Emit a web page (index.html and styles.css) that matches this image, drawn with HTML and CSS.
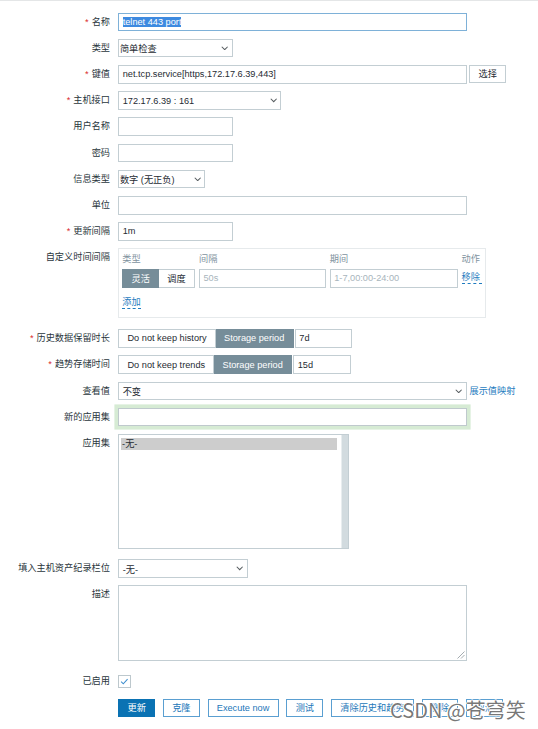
FILE: index.html
```html
<!DOCTYPE html>
<html lang="zh">
<head>
<meta charset="utf-8">
<title>监控项</title>
<link rel="stylesheet" href="styles.css">
</head>
<body>
<form class="form">
  <div class="row">
    <label class="lbl req">名称</label>
    <div class="ctl w-full focus"><span class="hl">telnet 443 port</span></div>
  </div>
  <div class="row">
    <label class="lbl">类型</label>
    <div class="ctl select tight w-sm"><span>简单检查</span><svg class="chev" viewBox="0 0 8 5"><polyline points="0.8,0.8 4,4 7.2,0.8"/></svg></div>
  </div>
  <div class="row">
    <label class="lbl req">键值</label>
    <div class="ctl w-full">net.tcp.service[https,172.17.6.39,443]</div>
    <button type="button" class="btn pick">选择</button>
  </div>
  <div class="row">
    <label class="lbl req">主机接口</label>
    <div class="ctl select w-host"><span>172.17.6.39 : 161</span><svg class="chev" viewBox="0 0 8 5"><polyline points="0.8,0.8 4,4 7.2,0.8"/></svg></div>
  </div>
  <div class="row">
    <label class="lbl">用户名称</label>
    <div class="ctl w-sm"></div>
  </div>
  <div class="row">
    <label class="lbl">密码</label>
    <div class="ctl w-sm"></div>
  </div>
  <div class="row">
    <label class="lbl">信息类型</label>
    <div class="ctl select tight w-info"><span>数字 (无正负)</span><svg class="chev" viewBox="0 0 8 5"><polyline points="0.8,0.8 4,4 7.2,0.8"/></svg></div>
  </div>
  <div class="row">
    <label class="lbl">单位</label>
    <div class="ctl w-full"></div>
  </div>
  <div class="row">
    <label class="lbl req">更新间隔</label>
    <div class="ctl w-sm">1m</div>
  </div>
  <div class="row row-box">
    <label class="lbl">自定义时间间隔</label>
    <div class="intervals">
      <div class="igrid ihead"><span>类型</span><span>间隔</span><span>期间</span><span>动作</span></div>
      <div class="igrid irow">
        <div class="seg"><span class="on">灵活</span><span>调度</span></div>
        <div class="ctl ph">50s</div>
        <div class="ctl ph">1-7,00:00-24:00</div>
        <a class="link dashed">移除</a>
      </div>
      <div class="iadd"><a class="link dashed">添加</a></div>
    </div>
  </div>
  <div class="row">
    <label class="lbl req">历史数据保留时长</label>
    <div class="seg"><span>Do not keep history</span><span class="on">Storage period</span></div>
    <div class="ctl w-days">7d</div>
  </div>
  <div class="row">
    <label class="lbl req">趋势存储时间</label>
    <div class="seg"><span>Do not keep trends</span><span class="on">Storage period</span></div>
    <div class="ctl w-days">15d</div>
  </div>
  <div class="row">
    <label class="lbl">查看值</label>
    <div class="ctl select w-full"><span>不变</span><svg class="chev" viewBox="0 0 8 5"><polyline points="0.8,0.8 4,4 7.2,0.8"/></svg></div>
    <a class="link map">展示值映射</a>
  </div>
  <div class="row">
    <label class="lbl">新的应用集</label>
    <div class="ctl w-full glow"></div>
  </div>
  <div class="row row-list">
    <label class="lbl">应用集</label>
    <div class="listbox">
      <div class="options"><div class="opt sel">-无-</div></div>
      <div class="scroll"></div>
    </div>
  </div>
  <div class="row">
    <label class="lbl">填入主机资产纪录栏位</label>
    <div class="ctl select w-inv"><span>-无-</span><svg class="chev" viewBox="0 0 8 5"><polyline points="0.8,0.8 4,4 7.2,0.8"/></svg></div>
  </div>
  <div class="row row-desc">
    <label class="lbl">描述</label>
    <div class="textarea">
      <svg class="grip" viewBox="0 0 9 9"><line x1="8.5" y1="1.5" x2="1.5" y2="8.5"/><line x1="8.5" y1="5" x2="5" y2="8.5"/></svg>
    </div>
  </div>
  <div class="row row-check">
    <label class="lbl">已启用</label>
    <div class="check"><svg viewBox="0 0 12 12"><polyline points="2.4,6.4 4.9,8.9 9.8,3.6"/></svg></div>
  </div>
  <div class="row">
    <span class="lbl"></span>
    <div class="btns">
      <button type="button" class="btn primary">更新</button>
      <button type="button" class="btn">克隆</button>
      <button type="button" class="btn">Execute now</button>
      <button type="button" class="btn">测试</button>
      <button type="button" class="btn">清除历史和趋势</button>
      <button type="button" class="btn">删除</button>
      <button type="button" class="btn">取消</button>
    </div>
  </div>
</form>
<div class="watermark">CSDN @苍穹笑</div>
</body>
</html>
```

FILE: styles.css
```css
* { box-sizing: border-box; }

html, body {
  margin: 0;
  padding: 0;
  background: #fff;
}

body {
  position: relative;
  min-height: 729px;
  border-top: 1px solid #e4e6e7;
  font-family: "Liberation Sans", "Noto Sans CJK SC", sans-serif;
  font-size: 9.2px;
  color: #1f2c33;
}

.form {
  padding-top: 11.7px;
}

.row {
  display: flex;
  align-items: flex-start;
  margin-bottom: 7.6px;
}

.row-box { margin-bottom: 11.6px; }
.row-list { margin-bottom: 10px; }
.row-desc { margin-bottom: 10.7px; }
.row-check { margin-bottom: 8.4px; align-items: center; height: 18.6px; }

.lbl {
  flex: 0 0 110px;
  margin-right: 8.3px;
  text-align: right;
  line-height: 18.6px;
  white-space: nowrap;
  color: #2a363c;
}

.req::before {
  content: "*";
  color: #d92a2a;
  margin-right: 3px;
}

.ctl {
  display: flex;
  align-items: center;
  height: 18.6px;
  padding: 0 3.4px;
  border: 1px solid #c3ced3;
  background: #fff;
  white-space: nowrap;
  overflow: hidden;
  color: #1f2c33;
}

.w-full { width: 348.4px; }
.w-sm { width: 114.6px; }
.w-host { width: 163.2px; }
.w-info { width: 87.2px; }
.w-inv { width: 129.4px; }
.w-days { width: 57.4px; margin-left: 1.4px; }

.focus { border-color: #7eb1d8; }

.hl {
  background: #3d8ae0;
  color: #fff;
  line-height: 10.4px;
}

.select { padding-right: 3.2px; }
.select.tight { padding-left: 0.6px; }

.chev {
  width: 7.4px;
  height: 4.6px;
  margin-left: auto;
  flex: none;
  fill: none;
  stroke: #555b5e;
  stroke-width: 1.1;
}

.btn {
  height: 18.4px;
  padding: 0 8.2px;
  border: 1px solid #5a9fd1;
  background: #fff;
  color: #1c77b9;
  font-family: inherit;
  font-size: 9.2px;
  line-height: 16px;
  white-space: nowrap;
  cursor: pointer;
}

.btn.primary {
  background: #0a72b3;
  border-color: #0a72b3;
  color: #fff;
}

.btn.pick {
  margin-left: 2.6px;
  height: 18.4px;
  border-color: #c3ced3;
  color: #1f2c33;
}

.btns {
  display: flex;
  gap: 7.9px;
}

.link {
  color: #1f7cc0;
  text-decoration: none;
  cursor: pointer;
}

.link.dashed {
  border-bottom: 1px dashed #1f7cc0;
  line-height: 11px;
}

.link.map {
  margin-left: 2.8px;
  line-height: 18.6px;
}

/* custom intervals */
.intervals {
  width: 367.4px;
  height: 69.2px;
  padding: 3.8px 3px 4.5px;
  border: 1px solid #e6eaec;
  background: #fff;
}

.igrid {
  display: grid;
  grid-template-columns: 73.4px 127.4px 128.3px auto;
  column-gap: 3.4px;
  align-items: center;
}

.ihead {
  line-height: 12px;
  height: 12px;
  margin-bottom: 4px;
  color: #8193a0;
}

.irow .ctl { width: auto; height: 18.4px; }

.ph { color: #a8b5bc; }

.iadd {
  margin-top: 5.5px;
  height: 19px;
  display: flex;
  align-items: center;
}

/* segmented radio */
.seg {
  display: flex;
  height: 18.4px;
}

.seg span {
  display: flex;
  align-items: center;
  padding: 0 8.2px;
  border: 1px solid #c3ced3;
  background: #fff;
  white-space: nowrap;
}

.seg span + span { border-left: none; }

.seg span.on {
  background: #768d99;
  border-color: #768d99;
  color: #fff;
}

/* new application glow */
.glow {
  border-color: #bfc9cd;
  box-shadow: 0 0 0 3.6px #d6ebd4;
}

/* listbox */
.listbox {
  display: flex;
  width: 231px;
  height: 115.3px;
  border: 1px solid #c3ced3;
  background: #fff;
}

.options {
  flex: 1;
  padding: 2.6px 4px 0 1.8px;
}

.opt {
  height: 12.3px;
  line-height: 12.3px;
  padding-left: 1px;
}

.opt.sel { background: #cdcdcd; }

.scroll {
  width: 7.4px;
  background: #d2dbdf;
  border-left: 1px solid #e8edef;
}

/* textarea */
.textarea {
  position: relative;
  width: 348.4px;
  height: 76px;
  border: 1px solid #c3ced3;
  background: #fff;
}

.grip {
  position: absolute;
  right: 1px;
  bottom: 1px;
  width: 9px;
  height: 9px;
  stroke: #9aa3a7;
  stroke-width: 0.9;
}

/* checkbox */
.check {
  width: 12.5px;
  height: 12.6px;
  border: 1px solid #bdc8cd;
  background: #fff;
}

.check svg {
  display: block;
  width: 100%;
  height: 100%;
  fill: none;
  stroke: #3f8fcf;
  stroke-width: 1.2;
}

/* watermark overlay */
.watermark {
  position: absolute;
  left: 390px;
  top: 696px;
  font-family: "Noto Sans CJK SC", sans-serif;
  font-size: 20px;
  line-height: 26px;
  color: rgba(95, 95, 95, 0.85);
  text-shadow: 1px 0 0 #fff, -1px 0 0 #fff, 0 1px 0 #fff, 0 -1px 0 #fff;
  white-space: nowrap;
  pointer-events: none;
}
```
